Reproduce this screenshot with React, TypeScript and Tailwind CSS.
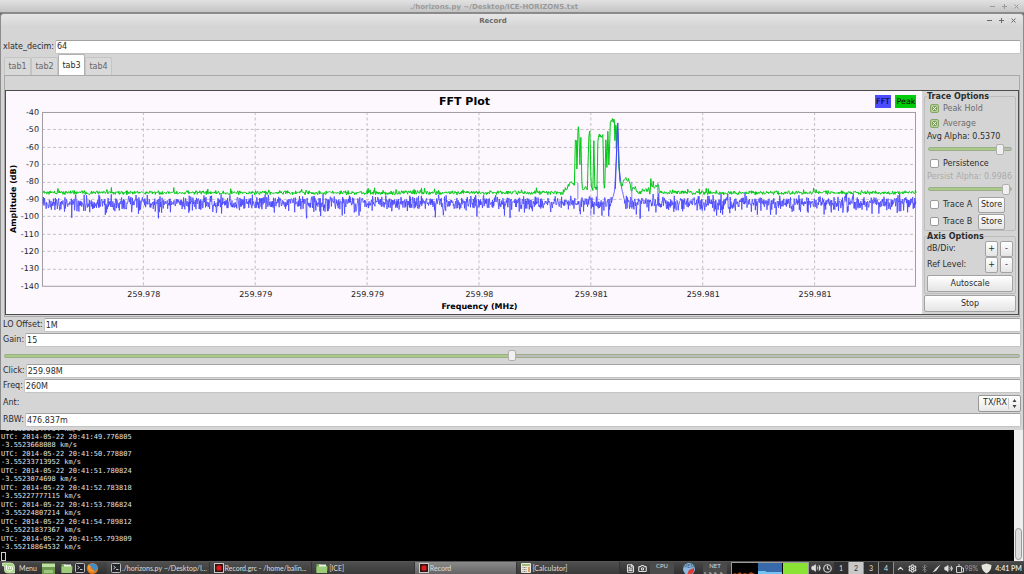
import React from 'react';
import clsx from 'clsx';
import { Bluetooth, Camera, ChevronUp, Clock, FileText, Settings, Volume2 } from 'lucide-react';

const PLOT = { left: 36, right: 911, top: 21, bottom: 196 };
const Y_TICKS = [-40, -50, -60, -70, -80, -90, -100, -110, -120, -130, -140];
const X_TICKS = [
  { x: 137, label: '259.978' },
  { x: 249, label: '259.979' },
  { x: 361, label: '259.979' },
  { x: 473, label: '259.98' },
  { x: 585, label: '259.981' },
  { x: 697, label: '259.981' },
  { x: 809, label: '259.981' },
];

// carrier peaks as x, y pairs in plot units
const PEAK_SHAPE: [number, number][] = [
  [558, 100], [562, 97], [565, 92], [568, 91], [569, 95], [570, 50], [571, 51], [571.6, 85], [572.7, 32],
  [573.6, 43], [574.6, 79], [575.4, 41], [576.6, 96], [578, 99], [580, 94], [582, 98], [583.6, 41],
  [584.7, 40], [585.7, 95], [587.6, 98], [588.6, 45], [589.4, 97], [591.6, 98], [592.6, 47], [594.6, 44],
  [596, 46], [597.6, 44], [598.6, 98], [599.6, 93], [600.6, 43], [601.6, 80], [602.6, 34], [603.6, 79],
  [605, 32], [607, 29], [609, 30], [609.7, 55], [610.4, 30], [611, 58], [611.7, 30], [612.4, 45],
  [613.5, 76], [614.5, 88], [616, 97], [618, 90], [620, 88], [624, 89], [626, 99],
];
const BLUE_SHAPE: [number, number][] = [
  [606, 111], [608, 106], [609.4, 98], [610.2, 82], [611, 68], [611.8, 42], [612.4, 32], [613, 50],
  [613.8, 76], [615, 88], [616.5, 98], [619, 108],
];

function makeRandom(seed: number) {
  let s = seed;
  return () => {
    s = (s * 1664525 + 1013904223) % 4294967296;
    return (s + 1) / 4294967297;
  };
}

function shapeAt(shape: [number, number][], x: number) {
  for (let i = 1; i < shape.length; i++) {
    const [x0, y0] = shape[i - 1];
    const [x1, y1] = shape[i];
    if (x >= x0 && x < x1) return y0 + ((y1 - y0) * (x - x0)) / (x1 - x0);
  }
  return null;
}

function bluePath() {
  const rand = makeRandom(77);
  const pts: string[] = [];
  for (let x = PLOT.left + 1; x <= PLOT.right; x += 0.4) {
    const power = -(Math.log(rand()) + Math.log(rand()) + Math.log(rand()) + Math.log(rand()) + Math.log(rand())) / 5;
    const noise = -19 * Math.log10(power);
    const peak = shapeAt(BLUE_SHAPE, x);
    const y = peak === null ? 111.5 + Math.min(noise, 16) : Math.min(peak + noise * 0.15, 120);
    pts.push(`${x.toFixed(1)},${Math.max(y, 31).toFixed(1)}`);
  }
  return 'M' + pts.join('L');
}

function greenPath() {
  const rand = makeRandom(4242);
  const pts: string[] = [];
  for (let x = PLOT.left + 1; x <= PLOT.right; x += 0.5) {
    let y = 102.3 - (rand() + rand() - 0.8) * 2.4;
    if (rand() > 0.95) y -= rand() * 4;
    const peak = shapeAt(PEAK_SHAPE, x);
    if (peak !== null) y = peak + (rand() - 0.5) * 4;
    if (x > 626 && x < 631) y -= 10 * rand();
    if (x > 636 && x < 644) y -= 5 * rand();
    if (x > 645 && x < 654) y -= 4 + 5 * rand();
    pts.push(`${x.toFixed(1)},${y.toFixed(1)}`);
  }
  return 'M' + pts.join('L');
}

function FftPlot() {
  return (
    <svg viewBox="0 0 917 223" className="block h-auto w-full min-w-0 flex-1 bg-[#fdf7fe]" fontFamily="DejaVu Sans" fontSize="8">
      <text x="459" y="14" textAnchor="middle" fontSize="11" fontWeight="bold">FFT Plot</text>
      <rect x="870" y="4" width="16" height="13" fill="#4b4bff" />
      <text x="878" y="13" textAnchor="middle" fontSize="8">FFT</text>
      <rect x="890" y="4" width="21" height="13" fill="#00cd0a" />
      <text x="901" y="13" textAnchor="middle" fontSize="8">Peak</text>
      <g stroke="#c3bec5" strokeDasharray="3 2.5">
        {Y_TICKS.slice(1, -1).map((db, i) => {
          const y = Math.round(PLOT.top + (i + 1) * 17.4) + 0.5;
          return <line key={db} x1={PLOT.left} x2={PLOT.right} y1={y} y2={y} />;
        })}
        {X_TICKS.map((t) => (
          <line key={t.x} x1={t.x + 0.5} x2={t.x + 0.5} y1={PLOT.top} y2={PLOT.bottom} />
        ))}
      </g>
      <rect x="36.5" y="21.5" width="874" height="174" fill="none" stroke="#a09ca2" />
      {Y_TICKS.map((db, i) => (
        <text key={db} x="33" y={24 + i * 17.4} textAnchor="end" fill="#222">{db}</text>
      ))}
      {X_TICKS.map((t) => (
        <text key={t.x} x={t.x + 1} y="206" textAnchor="middle" fill="#222">{t.label}</text>
      ))}
      <path d={bluePath()} fill="none" stroke="#4242ff" strokeWidth="0.8" />
      <path d={greenPath()} fill="none" stroke="#00c814" strokeWidth="1" />
      <path d="M610 98L611 68L611.8 42L612.5 32L613 50L613.8 76L615 90" fill="none" stroke="#4646ff" />
      <path d="M572.5 108V92M592 116V95M626.5 108V91M652.5 108V92M634.500 118V128M585.500 110V125" stroke="#6c68ff" strokeWidth="0.8" />
      <text x="474" y="218" textAnchor="middle" fontWeight="bold">Frequency (MHz)</text>
      <text transform="translate(10 108) rotate(-90)" textAnchor="middle" fontWeight="bold">Amplitude (dB)</text>
    </svg>
  );
}

function WindowButtons() {
  const paths = [
    { name: 'Minimize', d: 'M2 4.5h5' },
    { name: 'Maximize', d: 'M2 4.5h5M4.5 2v5' },
    { name: 'Close', d: 'M2.5 2.5l4 4M6.5 2.5l-4 4' },
  ];
  return (
    <div className="flex gap-[3px]">
      {paths.map((p) => (
        <button key={p.name} aria-label={p.name}>
          <svg viewBox="0 0 9 9" className="block size-[9px]" stroke="currentColor" fill="none">
            <path d={p.d} />
          </svg>
        </button>
      ))}
    </div>
  );
}

function Field({ id, label, value }: { id: string; label: string; value: string }) {
  return (
    <div className="flex h-[15px] items-center gap-px px-0.5">
      <label htmlFor={id}>{label}</label>
      <input
        id={id}
        defaultValue={value}
        className="h-[14px] min-w-0 flex-1 rounded-xs border border-[#c4c4c4] border-t-[#a2a2a2] bg-white px-px outline-none"
      />
    </div>
  );
}

function CheckBox({ id, label, checked, children }: { id: string; label: string; checked?: boolean; children?: React.ReactNode }) {
  return (
    <div className={clsx('flex items-center gap-1 pl-[3px]', children ? 'h-[17px]' : 'h-[15px]')}>
      <span className="relative block size-[9px]">
        <input
          id={id}
          type="checkbox"
          defaultChecked={checked}
          className="block size-[9px] appearance-none rounded-xs border border-[#9b9b9b] bg-white checked:border-[#87a568] checked:bg-[#b3d393]"
        />
        {checked && (
          <svg viewBox="0 0 9 9" className="pointer-events-none absolute inset-0" fill="none">
            <rect x="2" y="2" width="5" height="5" fill="#7d9c60" />
            <path d="M2.500 2.500l4 4M6.500 2.500l-4 4" stroke="#f2f8ea" />
          </svg>
        )}
      </span>
      <label htmlFor={id} className={clsx('flex-1', checked && 'text-[#6c6c6c]')}>{label}</label>
      {children}
    </div>
  );
}

function Slider({ label, value, className }: { label: string; value: number; className: string }) {
  return (
    <input
      type="range"
      aria-label={label}
      defaultValue={value}
      className={clsx(
        'block h-1 w-full appearance-none rounded-full border border-[#9cad8a] bg-linear-to-r from-[#a9cb87] to-[#bcbcbc]',
        '[&::-webkit-slider-thumb]:h-[11px] [&::-webkit-slider-thumb]:w-2 [&::-webkit-slider-thumb]:appearance-none [&::-webkit-slider-thumb]:rounded-xs [&::-webkit-slider-thumb]:border [&::-webkit-slider-thumb]:border-[#b0b0b0] [&::-webkit-slider-thumb]:bg-[#f0f0f0]',
        className,
      )}
    />
  );
}

function Button({ children, className }: { children: React.ReactNode; className?: string }) {
  return (
    <button className={clsx('rounded-xs border border-[#a2a2a2] bg-linear-to-b from-white to-[#e4e4e4] text-center', className)}>
      {children}
    </button>
  );
}

function Options() {
  return (
    <div className="w-24 shrink-0 bg-[#d4d4d4] px-0.5">
      <fieldset className="h-[140px] min-w-0 rounded-xs border border-[#bcbcbc] px-0.5">
        <legend className="h-[10px] font-bold leading-[11px]">Trace Options</legend>
        <CheckBox id="peak" label="Peak Hold" checked />
        <CheckBox id="average" label="Average" checked />
        <div className="leading-[11px]">Avg Alpha: 0.5370</div>
        <div className="flex h-[14px] items-center px-px">
          <Slider label="Avg Alpha" value={90} className="from-88% to-88%" />
        </div>
        <CheckBox id="persistence" label="Persistence" />
        <div className="whitespace-nowrap leading-[11px] text-[#ababab]">Persist Alpha: 0.9986</div>
        <div className="flex h-[14px] items-center px-px">
          <Slider label="Persist Alpha" value={99} className="from-98% to-98%" />
        </div>
        <CheckBox id="traceA" label="Trace A">
          <Button className="mr-2 h-4 w-[27px]">Store</Button>
        </CheckBox>
        <CheckBox id="traceB" label="Trace B">
          <Button className="mr-2 h-4 w-[27px]">Store</Button>
        </CheckBox>
      </fieldset>
      <fieldset className="min-w-0 rounded-xs border border-[#bcbcbc] px-0.5 pb-px">
        <legend className="h-[10px] font-bold leading-[11px]">Axis Options</legend>
        {['dB/Div:', 'Ref Level:'].map((label) => (
          <div key={label} className="flex h-4 items-center gap-0.5">
            <span className="flex-1">{label}</span>
            <Button className="h-4 w-[13px]">+</Button>
            <Button className="h-4 w-[13px]">-</Button>
          </div>
        ))}
        <Button className="mt-0.5 block h-[17px] w-full">Autoscale</Button>
      </fieldset>
      <Button className="mt-px block h-[17px] w-full">Stop</Button>
    </div>
  );
}

function RecordWindow() {
  const tabs = ['tab1', 'tab2', 'tab3', 'tab4'];
  return (
    <section className="rounded-t-sm border-x border-t border-[#8c8c8c] bg-[#d5d5d5] pb-0.5">
      <header className="flex h-[13px] items-center rounded-t-sm bg-linear-to-b from-[#e6e6e6] to-[#d5d5d5] pr-[5px] text-[#6a6a6a]">
        <h1 className="flex-1 text-center text-[7px] font-bold">Record</h1>
        <WindowButtons />
      </header>
      <div className="pt-3">
        <Field id="decim" label="xlate_decim:" value="64" />
      </div>
      <div role="tablist" className="flex h-[21px] items-end pl-[3px]">
        {tabs.map((tab) => (
          <button
            key={tab}
            role="tab"
            aria-selected={tab === 'tab3'}
            className={clsx(
              'w-[27px] rounded-t-xs border border-b-0 text-center',
              tab === 'tab3' ? 'h-[21px] border-[#b0b0b0] bg-white pt-px' : 'h-[18px] border-[#c4c4c4] bg-[#d9d9d9] text-[#666]',
            )}
          >
            {tab}
          </button>
        ))}
      </div>
      <div className="mx-[3px] border border-[#a9a9a9] pb-px pt-[14px]">
        <div className="flex border border-[#4c4c4c] bg-[#fdf7fe]">
          <FftPlot />
          <Options />
        </div>
      </div>
      <div className="pt-px">
        <Field id="lo" label="LO Offset:" value="1M" />
        <Field id="gain" label="Gain:" value="15" />
        <div className="flex h-4 items-center px-[3px]">
          <Slider label="Gain" value={50} className="from-50% to-50%" />
        </div>
        <Field id="click" label="Click:" value="259.98M" />
        <Field id="freq" label="Freq:" value="260M" />
        <div className="flex h-[19px] items-center justify-between px-0.5">
          <label htmlFor="ant">Ant:</label>
          <div className="relative">
            <select id="ant" className="block h-[17px] w-[43px] appearance-none rounded-xs border border-[#989898] bg-linear-to-b from-white to-[#e8e8e8] pl-1">
              <option>TX/RX</option>
            </select>
            <svg viewBox="0 0 12 15" className="pointer-events-none absolute right-px top-px h-[15px] w-3">
              <path d="M0.5 2v11" stroke="#c8c8c8" />
              <path d="M4.500 6L6.500 3L8.500 6zM4.500 9L6.500 12L8.500 9z" fill="#444" />
            </svg>
          </div>
        </div>
        <Field id="rbw" label="RBW:" value="476.837m" />
      </div>
    </section>
  );
}

const LOG = [
  ['UTC: 2014-05-22 20:41:49.776805', '-3.5523668088 km/s'],
  ['UTC: 2014-05-22 20:41:50.778807', '-3.55233713952 km/s'],
  ['UTC: 2014-05-22 20:41:51.780824', '-3.5523074698 km/s'],
  ['UTC: 2014-05-22 20:41:52.783818', '-3.55227777115 km/s'],
  ['UTC: 2014-05-22 20:41:53.786824', '-3.55224807214 km/s'],
  ['UTC: 2014-05-22 20:41:54.789812', '-3.55221837367 km/s'],
  ['UTC: 2014-05-22 20:41:55.793809', '-3.55218864532 km/s'],
];

function Terminal() {
  return (
    <div className="flex min-h-0 flex-1 basis-0 bg-black">
      <div className="flex min-w-0 flex-1 flex-col justify-end overflow-hidden whitespace-pre pl-px font-['DejaVu_Sans_Mono',monospace] text-[7px] leading-[8px] text-[#e2e2e2]">
        <div>-3.55239647734 km/s</div>
        {LOG.map(([time, speed]) => (
          <div key={time} className="pb-px">
            <div>{time}</div>
            <div>{speed}</div>
          </div>
        ))}
        <div className="h-[9px] w-[5px] shrink-0 border border-[#d0d0d0]" />
      </div>
      <div className="flex w-[10px] flex-col justify-end border-r border-[#999] bg-[#eeeeee] p-px">
        <div className="h-8 rounded-full border border-[#9a9a9a] bg-[#dcdcdc]" />
      </div>
    </div>
  );
}

function FolderIcon() {
  return (
    <svg viewBox="0 0 12 11" className="h-[11px] w-3 shrink-0">
      <path d="M0.500 1h4l1 1.500h5.500v7H0.500z" fill="#7aa856" />
      <path d="M3 1.500h7v3H3z" fill="#e9efe2" />
      <path d="M0.500 3.500h11l-0.500 6.500H0.500z" fill="#9dcc78" />
    </svg>
  );
}

function TerminalIcon() {
  return (
    <svg viewBox="0 0 10 10" className="size-[10px] shrink-0">
      <rect x="0.5" y="0.5" width="9" height="9" rx="1" fill="#23232b" stroke="#bdbdbd" />
      <path d="M2.500 3l2 1.500l-2 1.500M5 6.500h2.500" fill="none" stroke="#eee" strokeWidth="0.8" />
    </svg>
  );
}

function RecordIcon() {
  return (
    <svg viewBox="0 0 10 10" className="size-[10px] shrink-0">
      <rect x="0.5" y="0.5" width="9" height="9" fill="#3a1212" stroke="#c9c9c9" />
      <rect x="2.500" y="2.500" width="5" height="5" rx="1.500" fill="#d81c1c" />
    </svg>
  );
}

function CalcIcon() {
  return (
    <svg viewBox="0 0 10 10" className="size-[10px] shrink-0">
      <rect width="10" height="10" rx="1" fill="#ece8dc" />
      <path d="M1 1h8v2H1z" fill="#9bbb75" />
      <path d="M1.500 4.500h4M1.500 6.500h4M1.500 8.500h4" stroke="#85857f" strokeDasharray="1 0.5" />
      <path d="M7 4h2v5H7z" fill="#d8a25c" />
    </svg>
  );
}

const TASKS = [
  { title: './horizons.py ~/Desktop/I...', icon: <TerminalIcon /> },
  { title: 'Record.grc - /home/balin...', icon: <RecordIcon /> },
  { title: '[ICE]', icon: <FolderIcon /> },
  { title: 'Record', icon: <RecordIcon />, active: true },
  { title: '[Calculator]', icon: <CalcIcon /> },
];

function Monitors() {
  return (
    <svg viewBox="0 0 160 13" className="h-[13px] w-40 shrink-0" fontFamily="Lato" fontSize="6" fill="#ddd">
      <path d="M1 1h24v12H1zM54 1h24v12H54z" fill="#4b4b4b" />
      <text x="13" y="6" textAnchor="middle">CPU</text>
      <path d="M20 12.500h4" stroke="#c9a24a" />
      <circle cx="40" cy="7" r="6" fill="#8db8e0" />
      <path d="M40 8l5-2a6 6 0 0 1-7 7z" fill="#e03a34" />
      <text x="40" y="6" textAnchor="middle" fontSize="5" fill="#34587d">MEM</text>
      <text x="66" y="6" textAnchor="middle">NET</text>
      <path d="M56 10v3M60 11h2v2M65 11h2v2M71 11h2v2" stroke="#c6c6c6" fill="none" />
      <rect x="82.500" y="0.500" width="77" height="14" fill="#000" stroke="#9b9b9b" />
      <path d="M84 12l2-1l2 1l3-2l2 2l3-1l3 1l3-2l4 2v1H84z" fill="#b3481a" />
      <rect x="109" y="1" width="24" height="12" fill="#3769ab" />
      <path d="M109 9h8v1h16v3h-24z" fill="#73c4f2" />
      <rect x="134" y="1" width="25" height="12" fill="#8ae234" />
    </svg>
  );
}

function Taskbar() {
  return (
    <footer className="flex h-[13px] shrink-0 items-center overflow-hidden border-t border-[#555] bg-linear-to-b from-[#484848] to-[#303030] font-['Lato',sans-serif] text-[7px] leading-[12px] text-[#dedede]">
      <div className="flex w-[107px] shrink-0 items-center pl-0.5">
        <button className="flex w-10 items-center gap-1">
          <svg viewBox="0 0 13 12" className="h-3 w-[13px]">
            <path d="M0.500 1h8q4 0 4 4v6h-7q-3 0-3-3V4h-2z" fill="#a5d67b" stroke="#e8f4dc" strokeWidth="0.7" />
            <path d="M4.500 3v4q0 2 2 2h2q2 0 2-2V5.500q0-1-1-1t-1 1V7M8.500 5.500q0-1-1-1t-1 1V7" fill="none" stroke="#fff" />
          </svg>
          Menu
        </button>
        <svg viewBox="0 0 13 11" className="mr-1.5 h-[11px] w-[13px] shrink-0">
          <rect width="13" height="11" fill="#719a51" />
          <path d="M0 1h13v3H0z" fill="#c1dfa4" />
          <path d="M2 7h9v3H2z" fill="#9cc77a" />
        </svg>
        <FolderIcon />
        <span className="ml-0.5 flex gap-0.5">
          <TerminalIcon />
          <svg viewBox="0 0 11 11" className="size-[11px] shrink-0">
            <circle cx="5.500" cy="5.500" r="5.500" fill="#e4761b" />
            <path d="M3 1.500q3-2 6 0q2 3 0 6q-2 2-4 0q2-1 0-3l-2-1z" fill="#3a8fd0" />
            <path d="M1 1.500l3 2l-1 1.500l2 2l3 0.500q-3 3-6 0q-2-3-1-6z" fill="#f29a2e" />
          </svg>
        </span>
      </div>
      <nav className="flex min-w-0 flex-1">
        {TASKS.map((task, i) => (
          <button
            key={i}
            className={clsx(
              'flex h-[13px] min-w-0 flex-1 basis-0 items-center gap-px border-r border-[#343434] pl-1',
              task.active ? 'bg-linear-to-b from-[#8a8a8a] to-[#626262]' : 'bg-linear-to-b from-[#4f4f4f] to-[#383838]',
            )}
          >
            {task.icon}
            <span className="whitespace-nowrap">{task.title}</span>
          </button>
        ))}
      </nav>
      <div className="flex w-[29px] shrink-0 gap-[3px] pl-[6px]">
        <FileText size={9} strokeWidth={3} />
        <Camera size={9} strokeWidth={3} />
      </div>
      <Monitors />
      <div className="flex w-[25px] shrink-0 items-center gap-0.5 pl-0.5">
        <Volume2 size={10} fill="#dedede" />
        <Clock size={9} strokeWidth={3} />
      </div>
      <div className="flex shrink-0">
        {[1, 2, 3, 4].map((n) => (
          <button
            key={n}
            className={clsx('h-[13px] w-[15px] border-r border-[#8e8e8e] text-center', n === 2 ? 'bg-[#c8c8c8] text-[#333]' : 'bg-[#303030]')}
          >
            {n}
          </button>
        ))}
      </div>
      <div className="flex w-[130px] shrink-0 items-center justify-between px-0.5">
        <ChevronUp size={9} strokeWidth={3} />
        <Settings size={9} strokeWidth={3} />
        <Bluetooth size={9} className="text-[#8d8d8d]" />
        <svg viewBox="0 0 9 9" className="size-[9px]">
          <path d="M8.500 0.500L4 4l-1.500 2L0.500 8.500L4 7l1.500-2z" fill="#dedede" />
        </svg>
        <Volume2 size={9} fill="#dedede" />
        <span className="flex items-center text-[#a0a0a0]">
          <svg viewBox="0 0 8 9" className="h-[9px] w-2" fill="none" stroke="#cfcfcf">
            <path d="M0.500 2.500h5v6h-5zM2 1h2M5.500 4h2v4h-2" />
          </svg>
          98%
        </span>
        <svg viewBox="0 0 11 11" className="size-[11px]">
          <path d="M5.500 0.500L10.500 2q0 6-5 8.500q-5-2.500-5-8.500z" fill="#e4e4dc" />
        </svg>
        <span className="whitespace-nowrap font-bold">4:41 PM</span>
      </div>
    </footer>
  );
}

export default function App() {
  return (
    <div className="flex h-screen flex-col overflow-hidden bg-[#6e6e6e] font-['DejaVu_Sans',sans-serif] text-[8px] leading-[12px] text-[#2c2c2c]">
      <header className="flex h-[13px] shrink-0 items-center border-b border-[#8a8a8a] bg-linear-to-b from-[#e2e2e2] to-[#c4c4c4] pr-[3px] pt-px text-[#9a9a9a]">
        <div className="flex-1 text-center text-[7px] font-bold">./horizons.py ~/Desktop/ICE-HORIZONS.txt</div>
        <WindowButtons />
      </header>
      <RecordWindow />
      <Terminal />
      <Taskbar />
    </div>
  );
}
